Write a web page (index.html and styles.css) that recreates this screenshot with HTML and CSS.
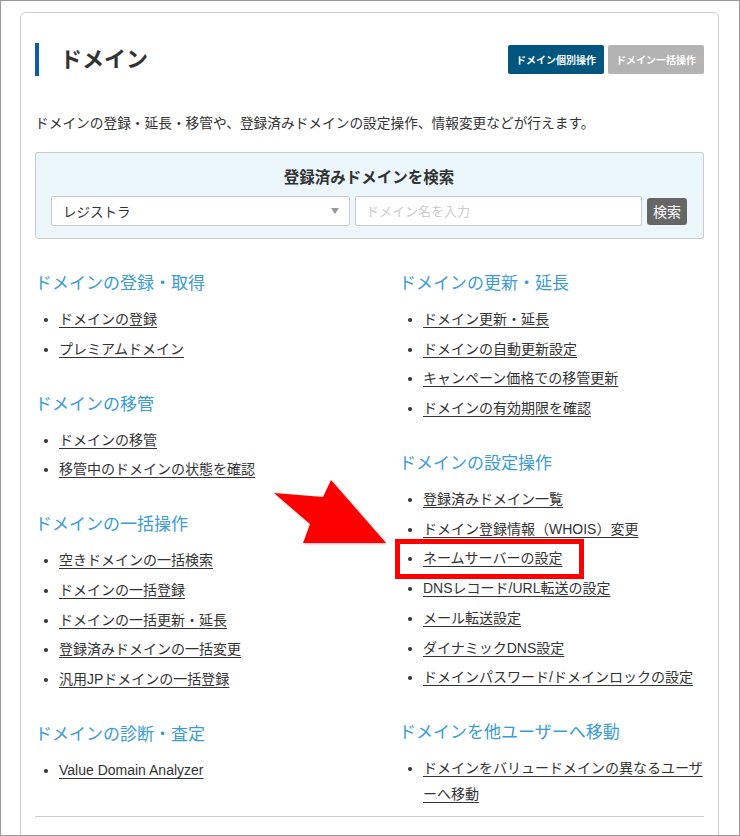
FILE: index.html
```html
<!DOCTYPE html>
<html lang="ja">
<head>
<meta charset="utf-8">
<title>ドメイン</title>
<link rel="stylesheet" href="styles.css">
</head>
<body>
<div class="frame">
  <div class="card">
    <div class="head">
      <h1 class="title">ドメイン</h1>
      <div class="tabs">
        <a class="tab tab-on">ドメイン個別操作</a>
        <a class="tab tab-off">ドメイン一括操作</a>
      </div>
    </div>
    <p class="desc">ドメインの登録・延長・移管や、登録済みドメインの設定操作、情報変更などが行えます。</p>
    <div class="search">
      <h2 class="search-title">登録済みドメインを検索</h2>
      <div class="search-row">
        <div class="select"><span>レジストラ</span><span class="caret"></span></div>
        <input class="input" type="text" placeholder="ドメイン名を入力">
        <button class="btn">検索</button>
      </div>
    </div>
    <div class="cols">
      <div class="col">
        <section class="sec">
          <h3>ドメインの登録・取得</h3>
          <ul>
            <li><a href="#">ドメインの登録</a></li>
            <li><a href="#">プレミアムドメイン</a></li>
          </ul>
        </section>
        <section class="sec">
          <h3>ドメインの移管</h3>
          <ul>
            <li><a href="#">ドメインの移管</a></li>
            <li><a href="#">移管中のドメインの状態を確認</a></li>
          </ul>
        </section>
        <section class="sec">
          <h3>ドメインの一括操作</h3>
          <ul>
            <li><a href="#">空きドメインの一括検索</a></li>
            <li><a href="#">ドメインの一括登録</a></li>
            <li><a href="#">ドメインの一括更新・延長</a></li>
            <li><a href="#">登録済みドメインの一括変更</a></li>
            <li><a href="#">汎用JPドメインの一括登録</a></li>
          </ul>
        </section>
        <section class="sec">
          <h3>ドメインの診断・査定</h3>
          <ul>
            <li><a href="#">Value Domain Analyzer</a></li>
          </ul>
        </section>
      </div>
      <div class="col">
        <section class="sec">
          <h3>ドメインの更新・延長</h3>
          <ul>
            <li><a href="#">ドメイン更新・延長</a></li>
            <li><a href="#">ドメインの自動更新設定</a></li>
            <li><a href="#">キャンペーン価格での移管更新</a></li>
            <li><a href="#">ドメインの有効期限を確認</a></li>
          </ul>
        </section>
        <section class="sec">
          <h3>ドメインの設定操作</h3>
          <ul>
            <li><a href="#">登録済みドメイン一覧</a></li>
            <li><a href="#">ドメイン登録情報（WHOIS）変更</a></li>
            <li><a href="#">ネームサーバーの設定</a></li>
            <li><a href="#">DNSレコード/URL転送の設定</a></li>
            <li><a href="#">メール転送設定</a></li>
            <li><a href="#">ダイナミックDNS設定</a></li>
            <li><a href="#">ドメインパスワード/ドメインロックの設定</a></li>
          </ul>
        </section>
        <section class="sec">
          <h3>ドメインを他ユーザーへ移動</h3>
          <ul>
            <li><a href="#">ドメインをバリュードメインの異なるユーザーへ移動</a></li>
          </ul>
        </section>
      </div>
    </div>
    <hr class="rule">
  </div>
  <svg class="arrow" width="120" height="72" viewBox="0 0 120 72" aria-hidden="true">
    <polygon points="3,16 52,20 60,3 115,66 32,66 39,47" fill="#ff0000"/>
  </svg>
  <div class="highlight"></div>
</div>
</body>
</html>
```
FILE: styles.css
```css
html, body {
  margin: 0;
  padding: 0;
  background: #fff;
}
body {
  font-family: "Liberation Sans", "Noto Sans CJK JP", sans-serif;
  color: #333;
}
.frame {
  position: relative;
  width: 740px;
  height: 836px;
  box-sizing: border-box;
  border: 1px solid #999;
  overflow: hidden;
  background: #fff;
}
.card {
  margin: 11px 0 0 19px;
  width: 699px;
  box-sizing: border-box;
  border: 1px solid #ccc;
  border-radius: 5px;
  padding: 30px 14px 40px 14px;
}
.head {
  display: flex;
  align-items: center;
  justify-content: space-between;
}
.title {
  margin: 0;
  border-left: 4px solid #0a5ba8;
  padding-left: 21px;
  font-size: 22px;
  line-height: 33px;
  font-weight: bold;
  color: #333;
}
.tabs {
  display: flex;
  gap: 4px;
}
.tab {
  display: flex;
  align-items: center;
  justify-content: center;
  width: 96px;
  height: 29px;
  border-radius: 2px;
  color: #fff;
  font-size: 10px;
  font-weight: bold;
}
.tab-on { background: #00567f; }
.tab-off { background: #b3b3b3; }
.desc {
  margin: 38px 0 18px;
  font-size: 13.7px;
  line-height: 20px;
  color: #333;
}
.search {
  background: #ecf7fb;
  border: 1px solid #ccc;
  border-radius: 3px;
  padding: 15px 16px 12px 15px;
}
.search-title {
  margin: 0 0 8px;
  text-align: center;
  font-size: 15.5px;
  line-height: 20px;
  font-weight: bold;
  color: #333;
}
.search-row {
  display: flex;
  align-items: center;
  gap: 5px;
}
.select {
  width: 299px;
  height: 30px;
  box-sizing: border-box;
  background: #fff;
  border: 1px solid #ccc;
  border-radius: 2px;
  display: flex;
  align-items: center;
  justify-content: space-between;
  padding: 0 10px 0 11px;
  font-size: 13.5px;
  color: #333;
}
.caret {
  width: 0;
  height: 0;
  border-left: 4px solid transparent;
  border-right: 4px solid transparent;
  border-top: 6px solid #999;
}
.input {
  flex: 1;
  min-width: 0;
  height: 30px;
  box-sizing: border-box;
  border: 1px solid #ccc;
  border-radius: 2px;
  padding: 0 10px;
  font-family: inherit;
  font-size: 13px;
  background: #fff;
}
.input::placeholder { color: #ccc; }
.btn {
  width: 40px;
  height: 27px;
  border: 0;
  border-radius: 3px;
  background: #666;
  color: #fff;
  font-family: inherit;
  font-size: 14px;
  padding: 0;
}
.cols {
  display: grid;
  grid-template-columns: 364px 1fr;
  margin-top: 33px;
}
.sec + .sec { margin-top: 31px; }
.sec h3 {
  margin: 0;
  font-size: 17px;
  line-height: 24px;
  font-weight: normal;
  color: #3a9bd6;
}
.sec ul {
  margin: 10px 0 0;
  padding-left: 24px;
  list-style: disc;
}
.sec li {
  font-size: 14px;
  line-height: 26px;
}
.sec li + li { margin-top: 3.7px; }
.sec li::marker { font-size: 13px; }
.sec a {
  color: #333;
  text-decoration: underline;
  text-underline-offset: 3px;
}
.rule {
  margin: 9px 0 0;
  border: 0;
  border-top: 1px solid #ccc;
}
.arrow {
  position: absolute;
  left: 270px;
  top: 476px;
  filter: drop-shadow(1px 1px 1px rgba(0,0,0,0.3));
}
.highlight {
  position: absolute;
  left: 394px;
  top: 538px;
  width: 189px;
  height: 40px;
  box-sizing: border-box;
  border: 5px solid #ff0000;
}
```
